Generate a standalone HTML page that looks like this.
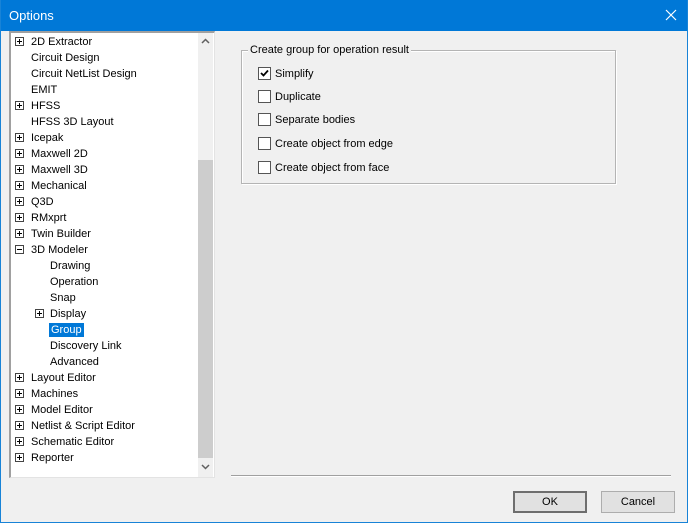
<!DOCTYPE html>
<html><head><meta charset="utf-8"><style>
*{margin:0;padding:0;box-sizing:border-box}
body{width:688px;height:523px;overflow:hidden;background:#f0f0f0;font-family:"Liberation Sans",Arial,sans-serif;font-size:11px;color:#000;position:relative}
.frame{position:absolute;left:0;top:0;width:688px;height:523px;border:1px solid #1883d7;border-top:none}
.title{position:absolute;left:0;top:0;width:688px;height:31px;background:#0078d7;color:#fff;font-size:13px}
.title span{position:absolute;left:9px;top:8px}
.tree{position:absolute;left:9px;top:31px;width:206px;height:447px;background:#fff;border-top:2px solid #a0a0a0;border-left:2px solid #a0a0a0;border-right:1px solid #e3e3e3;border-bottom:1px solid #e3e3e3}
.sb{position:absolute;left:198px;top:33px;width:15px;height:444px;background:#f0f0f0}
.thumb{position:absolute;left:198px;top:160px;width:15px;height:298px;background:#cdcdcd}
.row{position:absolute;height:16px;line-height:16px;white-space:nowrap;margin-top:1px}
.exp{position:absolute;width:9px;height:9px;border:1px solid #444;background:#fff;margin-top:1px}
.exp:before{content:"";position:absolute;left:1px;top:3px;width:5px;height:1px;background:#000}
.exp.p:after{content:"";position:absolute;left:3px;top:1px;width:1px;height:5px;background:#000}
.sel{background:#0078d7;color:#fff;padding:1px 2px;margin-left:-1px}
.gb{position:absolute;left:241px;top:50px;width:375px;height:134px;border:1px solid #b4b4b4;box-shadow:inset 1px 1px 0 #fff,1px 1px 0 #fff}
.gb .lg{position:absolute;left:6px;top:-7px;background:#f0f0f0;padding:0 2px;line-height:13px}
.cb{position:absolute;left:258px;width:13px;height:13px;border:1px solid #555;background:#fff;margin-top:1px}
.cl{position:absolute;left:275px;line-height:13px;margin-top:1px}
.sep{position:absolute;left:231px;top:475px;width:440px;height:2px;border-top:1px solid #a0a0a0;border-bottom:1px solid #fff}
.btn{position:absolute;top:491px;width:74px;height:22px;background:#e1e1e1;border:1px solid #adadad;text-align:center;line-height:20px;font-size:11px}
.btn.def{border:2px solid #6e6e6e;line-height:18px}
</style></head><body>
<div class="title"><span>Options</span>
<svg style="position:absolute;left:665px;top:9px" width="12" height="12" viewBox="0 0 12 12"><path d="M1 1L11 11M11 1L1 11" stroke="#fff" stroke-width="1.2"/></svg></div>
<div class="frame"></div>
<div class="tree"></div>
<div class="sb"></div>
<div class="thumb"></div>
<svg style="position:absolute;left:201px;top:38px" width="9" height="6" viewBox="0 0 9 6"><path d="M1 5L4.5 1.5L8 5" stroke="#606060" stroke-width="1.5" fill="none"/></svg>
<svg style="position:absolute;left:201px;top:464px" width="9" height="6" viewBox="0 0 9 6"><path d="M1 1L4.5 4.5L8 1" stroke="#606060" stroke-width="1.5" fill="none"/></svg>

<div class="exp p" style="left:15px;top:36px"></div><div class="row" style="left:31px;top:33px">2D Extractor</div>
<div class="row" style="left:31px;top:49px">Circuit Design</div>
<div class="row" style="left:31px;top:65px">Circuit NetList Design</div>
<div class="row" style="left:31px;top:81px">EMIT</div>
<div class="exp p" style="left:15px;top:100px"></div><div class="row" style="left:31px;top:97px">HFSS</div>
<div class="row" style="left:31px;top:113px">HFSS 3D Layout</div>
<div class="exp p" style="left:15px;top:132px"></div><div class="row" style="left:31px;top:129px">Icepak</div>
<div class="exp p" style="left:15px;top:148px"></div><div class="row" style="left:31px;top:145px">Maxwell 2D</div>
<div class="exp p" style="left:15px;top:164px"></div><div class="row" style="left:31px;top:161px">Maxwell 3D</div>
<div class="exp p" style="left:15px;top:180px"></div><div class="row" style="left:31px;top:177px">Mechanical</div>
<div class="exp p" style="left:15px;top:196px"></div><div class="row" style="left:31px;top:193px">Q3D</div>
<div class="exp p" style="left:15px;top:212px"></div><div class="row" style="left:31px;top:209px">RMxprt</div>
<div class="exp p" style="left:15px;top:228px"></div><div class="row" style="left:31px;top:225px">Twin Builder</div>
<div class="exp" style="left:15px;top:244px"></div><div class="row" style="left:31px;top:241px">3D Modeler</div>
<div class="row" style="left:50px;top:257px">Drawing</div>
<div class="row" style="left:50px;top:273px">Operation</div>
<div class="row" style="left:50px;top:289px">Snap</div>
<div class="exp p" style="left:35px;top:308px"></div><div class="row" style="left:50px;top:305px">Display</div>
<div class="row" style="left:50px;top:321px"><span class="sel">Group</span></div>
<div class="row" style="left:50px;top:337px">Discovery Link</div>
<div class="row" style="left:50px;top:353px">Advanced</div>
<div class="exp p" style="left:15px;top:372px"></div><div class="row" style="left:31px;top:369px">Layout Editor</div>
<div class="exp p" style="left:15px;top:388px"></div><div class="row" style="left:31px;top:385px">Machines</div>
<div class="exp p" style="left:15px;top:404px"></div><div class="row" style="left:31px;top:401px">Model Editor</div>
<div class="exp p" style="left:15px;top:420px"></div><div class="row" style="left:31px;top:417px">Netlist &amp; Script Editor</div>
<div class="exp p" style="left:15px;top:436px"></div><div class="row" style="left:31px;top:433px">Schematic Editor</div>
<div class="exp p" style="left:15px;top:452px"></div><div class="row" style="left:31px;top:449px">Reporter</div>

<div class="gb"><div class="lg">Create group for operation result</div></div>
<div class="cb" style="top:66px"><svg width="11" height="11" viewBox="0 0 11 11" style="position:absolute;left:0;top:0"><path d="M2 5L4.5 7.5L9 2.5" stroke="#000" stroke-width="1.8" fill="none"/></svg></div><div class="cl" style="top:67px">Simplify</div>
<div class="cb" style="top:89px"></div><div class="cl" style="top:90px">Duplicate</div>
<div class="cb" style="top:112px"></div><div class="cl" style="top:113px">Separate bodies</div>
<div class="cb" style="top:136px"></div><div class="cl" style="top:137px">Create object from edge</div>
<div class="cb" style="top:160px"></div><div class="cl" style="top:161px">Create object from face</div>

<div class="sep"></div>
<div class="btn def" style="left:513px">OK</div>
<div class="btn" style="left:601px">Cancel</div>
</body></html>
